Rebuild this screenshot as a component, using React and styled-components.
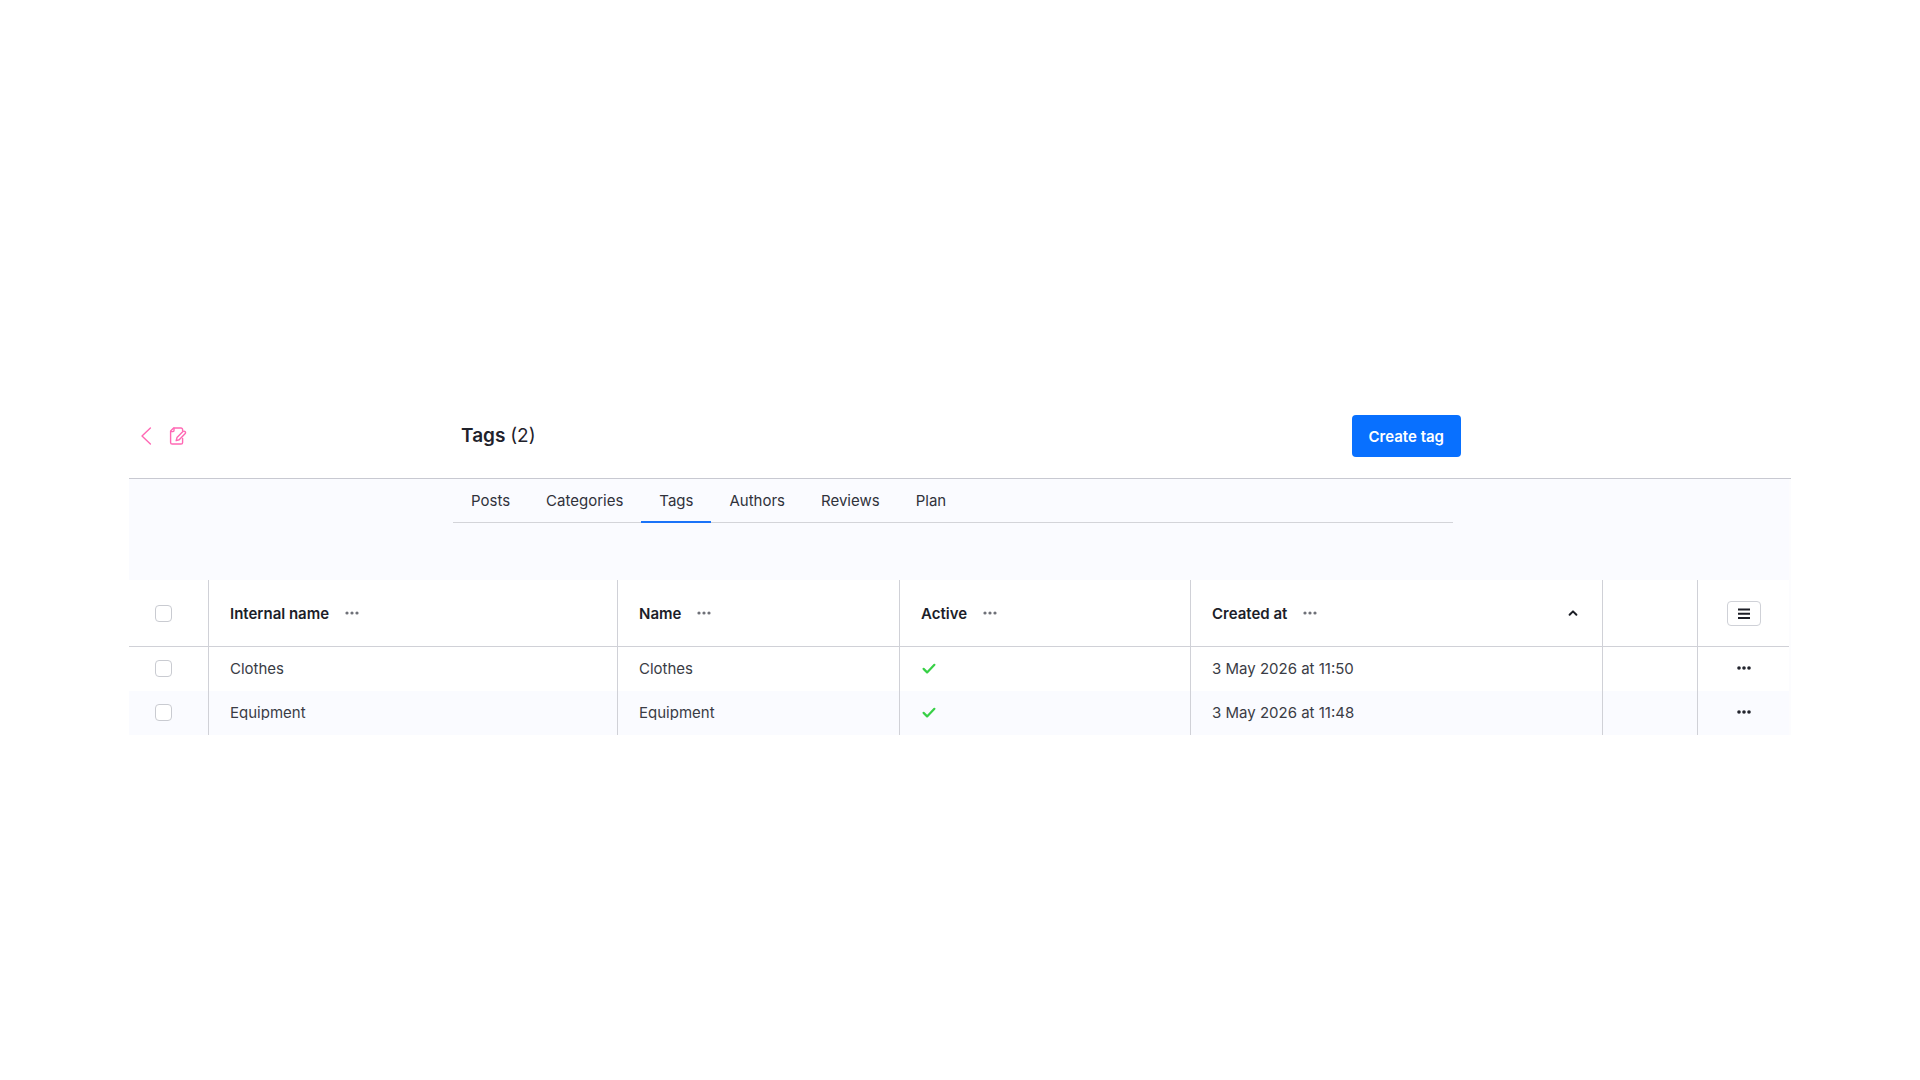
import React, { useState } from 'react';
import styled, { createGlobalStyle } from 'styled-components';

const GlobalStyle = createGlobalStyle`
  * {
    box-sizing: border-box;
  }

  body {
    margin: 0;
    background: #fff;
    color: #1f222b;
    font-family: Inter, 'Liberation Sans', sans-serif;
    font-size: 15px;
  }
`;

const Page = styled.div`
  padding: 394px 129px 0;
`;

const Header = styled.header`
  display: grid;
  grid-template-columns: 1fr minmax(0, 1000px) 1fr;
  align-items: center;
  height: 85px;
  padding-left: 2px;
  border-bottom: 1px solid #c8c9d1;
`;

const ModuleNav = styled.nav`
  display: flex;
  align-items: center;
  gap: 17px;
  padding-left: 9px;
`;

const IconLink = styled.a`
  display: flex;
  color: #ff68b4;
`;

const HeaderBar = styled.div`
  display: flex;
  align-items: center;
  justify-content: space-between;
`;

const Title = styled.h1`
  margin: 0;
  font-size: 19px;
  font-weight: 600;
  line-height: 24px;
`;

const Count = styled.span`
  font-weight: 400;
`;

const CreateButton = styled.button`
  height: 42px;
  padding: 0 17px;
  border: 0;
  border-radius: 4px;
  background: #0870ff;
  color: #fff;
  font: inherit;
  font-weight: 600;
  cursor: pointer;
`;

const Content = styled.main`
  border-right: 2px solid #fcfcfe;
`;

const TabArea = styled.div`
  display: flex;
  justify-content: center;
  padding: 0 12px 57px 0;
  background: #fafbff;
`;

const Tabs = styled.nav`
  display: flex;
  flex: 0 1 1000px;
  border-bottom: 1px solid #d3d4d9;
`;

const Tab = styled.a`
  padding: 2px 18px 0;
  margin-bottom: -1px;
  border-bottom: 2px solid ${props => props.$active ? '#1a73f8' : 'transparent'};
  color: #30323b;
  line-height: 40px;
  text-decoration: none;
`;

const Table = styled.table`
  width: 100%;
  margin-bottom: 23px;
  table-layout: fixed;
  border-collapse: separate;
  border-spacing: 0;
`;

const Col = styled.col`
  width: ${props => props.$width || 'auto'};
`;

const HeadCell = styled.th`
  height: 67px;
  padding: 0 21px;
  border-right: 1px solid #d0d1d7;
  border-bottom: 1px solid #d0d1d7;
  color: #1c1e29;
  font-weight: 600;
  text-align: left;

  &:last-child {
    border-right: 0;
  }
`;

const Row = styled.tr`
  background: #fff;

  &:nth-child(even) {
    background: #fafbff;
  }
`;

const Cell = styled.td`
  height: 44px;
  padding: 0 21px 2px;
  border-right: 1px solid #d0d1d7;
  color: #3a3c45;

  &:last-child {
    border-right: 0;
  }
`;

const HeadContent = styled.div`
  display: flex;
  align-items: center;
  gap: 16px;
`;

const SortIcon = styled.svg`
  margin: 0 2px 0 auto;
`;

const CellText = styled.div`
  overflow: hidden;
  line-height: 15px;
`;

const Centered = styled.div`
  display: flex;
  align-items: center;
  justify-content: center;
`;

const SelectCell = styled.div`
  display: flex;
  padding-left: 5px;
`;

const Checkbox = styled.input`
  appearance: none;
  width: 17px;
  height: 17px;
  margin: 0;
  border: 1px solid #c9cbd1;
  border-radius: 4px;
  background: #fff;

  &:checked {
    border-color: #0870ff;
    background: #0870ff;
  }
`;

const PlainButton = styled.button`
  display: flex;
  padding: 0;
  border: 0;
  background: none;
  color: ${props => props.$muted ? '#6f7178' : '#22242d'};
  cursor: pointer;
`;

const SettingsButton = styled.button`
  display: flex;
  align-items: center;
  justify-content: center;
  width: 34px;
  height: 25px;
  padding: 0;
  border: 1px solid #cfd1d7;
  border-radius: 4px;
  background: #fff;
  color: #1c1e26;
  cursor: pointer;
`;

const BackIcon = () => (
  <svg width="12" height="18" viewBox="0 0 12 18" fill="none" stroke="currentColor" strokeWidth="1.4">
    <path d="M10.4 1 2 9l8.4 8" strokeLinecap="round" strokeLinejoin="round" />
  </svg>
);

const ContentIcon = () => (
  <svg width="18" height="18" viewBox="0 0 18 18" fill="none" stroke="currentColor" strokeWidth="1.4" strokeLinecap="round" strokeLinejoin="round">
    <path d="M13.6 3.4V2.6A1.6 1.6 0 0 0 12 1H4.6L1.6 4v11.4A1.6 1.6 0 0 0 3.2 17H12a1.6 1.6 0 0 0 1.6-1.6v-4" />
    <path d="M5 1.2v2.4a1 1 0 0 1-1 1H1.8" />
    <path d="m8 10.6-.8 3 3-.8 5.8-6.1a1.4 1.4 0 0 0-2.1-2.1z" />
  </svg>
);

const DotsIcon = ({ size }) => (
  <svg width="14" height="14" viewBox="0 0 14 14" fill="currentColor">
    <circle cx="2" cy="7" r={size} />
    <circle cx="7" cy="7" r={size} />
    <circle cx="12" cy="7" r={size} />
  </svg>
);

const CheckIcon = () => (
  <svg width="16" height="16" viewBox="0 0 16 16" fill="none" stroke="#37d046" strokeWidth="2.2" role="img" aria-label="Active">
    <path d="m2.6 8.9 3.5 3.5 7.3-7.6" strokeLinecap="round" strokeLinejoin="round" />
  </svg>
);

const ListIcon = () => (
  <svg width="14" height="14" viewBox="0 0 14 14" stroke="currentColor" strokeWidth="2">
    <path d="M1 3.5h12M1 7.7h12M1 11.9h12" />
  </svg>
);

const tabs = ['Posts', 'Categories', 'Tags', 'Authors', 'Reviews', 'Plan'];

const columns = [
  { id: 'internalName', label: 'Internal name' },
  { id: 'name', label: 'Name', width: '282px' },
  { id: 'active', label: 'Active', width: '291px' },
  { id: 'createdAt', label: 'Created at', width: '412px', sorted: true },
];

const rows = [
  { id: 1, name: 'Clothes', createdAt: '3 May 2026 at 11:50' },
  { id: 2, name: 'Equipment', createdAt: '3 May 2026 at 11:48' },
];

const App = () => {
  const [activeTab, setActiveTab] = useState('Tags');
  const [selected, setSelected] = useState([]);

  const onTabClick = (event, tab) => {
    event.preventDefault();
    setActiveTab(tab);
  }
  const toggleRow = (id) => {
    setSelected(selected.includes(id) ? selected.filter(item => item !== id) : [...selected, id]);
  }
  const toggleAll = () => {
    setSelected(selected.length === rows.length ? [] : rows.map(({ id }) => id));
  }

  return (
    <>
      <GlobalStyle />
      <Page>
        <Header>
          <ModuleNav>
            <IconLink href="#back" aria-label="Back"><BackIcon /></IconLink>
            <IconLink href="#content" aria-label="Content"><ContentIcon /></IconLink>
          </ModuleNav>
          <HeaderBar>
            <Title>Tags <Count>({rows.length})</Count></Title>
            <CreateButton type="button">Create tag</CreateButton>
          </HeaderBar>
        </Header>
        <Content>
          <TabArea>
            <Tabs>
              { tabs.map(tab => (
                <Tab
                  key={tab}
                  href={`#${tab.toLowerCase()}`}
                  $active={tab === activeTab}
                  onClick={event => onTabClick(event, tab)}
                >
                  {tab}
                </Tab>
              ))}
            </Tabs>
          </TabArea>
          <Table>
            <colgroup>
              <Col $width="80px" />
              { columns.map(({ id, width }) => <Col key={id} $width={width} />)}
              <Col $width="95px" />
              <Col $width="91px" />
            </colgroup>
            <thead>
              <tr>
                <HeadCell>
                  <SelectCell>
                    <Checkbox
                      type="checkbox"
                      aria-label="Select all"
                      checked={selected.length === rows.length}
                      onChange={toggleAll}
                    />
                  </SelectCell>
                </HeadCell>
                { columns.map(({ id, label, sorted }) => (
                  <HeadCell key={id}>
                    <HeadContent>
                      {label}
                      <PlainButton type="button" $muted aria-label={`${label} options`}>
                        <DotsIcon size={1.6} />
                      </PlainButton>
                      { sorted &&
                        <SortIcon width="12" height="12" viewBox="0 0 12 12" fill="none" stroke="#1c1e26" strokeWidth="2">
                          <path d="m2.6 7.8 3.4-3.4 3.4 3.4" strokeLinecap="round" strokeLinejoin="round" />
                        </SortIcon>
                      }
                    </HeadContent>
                  </HeadCell>
                ))}
                <HeadCell />
                <HeadCell>
                  <Centered>
                    <SettingsButton type="button" aria-label="List settings"><ListIcon /></SettingsButton>
                  </Centered>
                </HeadCell>
              </tr>
            </thead>
            <tbody>
              { rows.map(({ id, name, createdAt }) => (
                <Row key={id}>
                  <Cell>
                    <SelectCell>
                      <Checkbox
                        type="checkbox"
                        aria-label={`Select ${name}`}
                        checked={selected.includes(id)}
                        onChange={() => toggleRow(id)}
                      />
                    </SelectCell>
                  </Cell>
                  <Cell><CellText>{name}</CellText></Cell>
                  <Cell><CellText>{name}</CellText></Cell>
                  <Cell><HeadContent><CheckIcon /></HeadContent></Cell>
                  <Cell>{createdAt}</Cell>
                  <Cell />
                  <Cell>
                    <Centered>
                      <PlainButton type="button" aria-label={`${name} actions`}>
                        <DotsIcon size={1.8} />
                      </PlainButton>
                    </Centered>
                  </Cell>
                </Row>
              ))}
            </tbody>
          </Table>
        </Content>
      </Page>
    </>
  );
}

export default App;
